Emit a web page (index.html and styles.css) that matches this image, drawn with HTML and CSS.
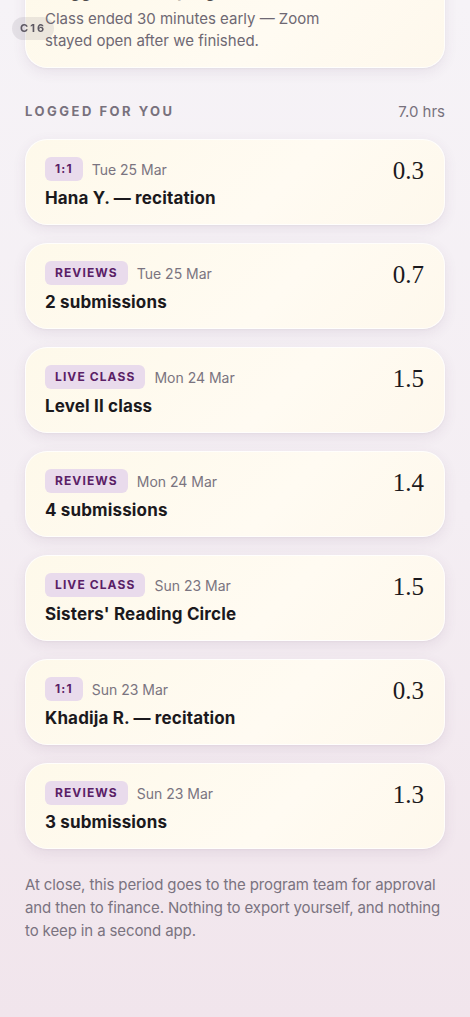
FILE: index.html
```html
<!DOCTYPE html>
<html lang="en">
<head>
  <meta charset="UTF-8" />
  <meta name="viewport" content="width=device-width, initial-scale=1.0" />
  <title>Logged hours</title>
  <link rel="stylesheet" href="styles.css">
</head>
<body>

  <div class="screen-tag">C16</div>

  <main class="page">
    <section class="card note-card">
      <div class="card-title">Flagged for the program team</div>
      <p class="note">Class ended 30 minutes early — Zoom stayed open after we finished.</p>
    </section>

    <div class="section-head">
      <span class="section-label">Logged for you</span>
      <span class="section-total">7.0 hrs</span>
    </div>

    <ul class="log-list">
      <li class="card log-card">
        <div class="log-main">
          <div class="log-meta"><span class="pill">1:1</span><span class="log-date">Tue 25 Mar</span></div>
          <div class="card-title">Hana Y. — recitation</div>
        </div>
        <div class="log-hours">0.3</div>
      </li>
      <li class="card log-card">
        <div class="log-main">
          <div class="log-meta"><span class="pill">Reviews</span><span class="log-date">Tue 25 Mar</span></div>
          <div class="card-title">2 submissions</div>
        </div>
        <div class="log-hours">0.7</div>
      </li>
      <li class="card log-card">
        <div class="log-main">
          <div class="log-meta"><span class="pill">Live class</span><span class="log-date">Mon 24 Mar</span></div>
          <div class="card-title">Level II class</div>
        </div>
        <div class="log-hours">1.5</div>
      </li>
      <li class="card log-card">
        <div class="log-main">
          <div class="log-meta"><span class="pill">Reviews</span><span class="log-date">Mon 24 Mar</span></div>
          <div class="card-title">4 submissions</div>
        </div>
        <div class="log-hours">1.4</div>
      </li>
      <li class="card log-card">
        <div class="log-main">
          <div class="log-meta"><span class="pill">Live class</span><span class="log-date">Sun 23 Mar</span></div>
          <div class="card-title">Sisters' Reading Circle</div>
        </div>
        <div class="log-hours">1.5</div>
      </li>
      <li class="card log-card">
        <div class="log-main">
          <div class="log-meta"><span class="pill">1:1</span><span class="log-date">Sun 23 Mar</span></div>
          <div class="card-title">Khadija R. — recitation</div>
        </div>
        <div class="log-hours">0.3</div>
      </li>
      <li class="card log-card">
        <div class="log-main">
          <div class="log-meta"><span class="pill">Reviews</span><span class="log-date">Sun 23 Mar</span></div>
          <div class="card-title">3 submissions</div>
        </div>
        <div class="log-hours">1.3</div>
      </li>
    </ul>

    <p class="footnote">At close, this period goes to the program team for approval and then to finance. Nothing to export yourself, and nothing to keep in a second app.</p>
  </main>

</body>
</html>
```

FILE: styles.css
```css
* {
  margin: 0;
  padding: 0;
  box-sizing: border-box;
}

html, body {
  height: 100%;
}

body {
  font-family: Inter, "Noto Sans", sans-serif;
  background: linear-gradient(180deg, #f6f3f7 0%, #f4eef3 50%, #f1e5ec 100%);
  color: #1c1a1e;
  overflow: hidden;
}

.screen-tag {
  position: fixed;
  top: 17px;
  left: 12px;
  padding: 0 8px;
  height: 23px;
  line-height: 23px;
  border-radius: 12px;
  background: rgba(120, 115, 125, 0.14);
  color: #5d5862;
  font-size: 11px;
  font-weight: 700;
  letter-spacing: 2px;
  z-index: 5;
}

.page {
  margin-top: -40px;
  padding: 0 25px;
}

.card {
  background: linear-gradient(135deg, #fef9ea 0%, #fffbf2 60%, #fef8ec 100%);
  border: 1px solid rgba(255, 255, 255, 0.8);
  border-radius: 22px;
  box-shadow: 0 4px 14px rgba(90, 60, 100, 0.09), 0 1px 2px rgba(90, 60, 100, 0.05);
}

.card-title {
  font-size: 17px;
  font-weight: 700;
  line-height: 24px;
  color: #1b191d;
  letter-spacing: 0.15px;
}

.note-card {
  padding: 18px 19px 15px;
}

.note-card .card-title {
  margin-bottom: 5px;
}

.note {
  font-size: 15px;
  line-height: 22px;
  color: #6e6873;
  padding-right: 60px;
}

.section-head {
  display: flex;
  justify-content: space-between;
  align-items: center;
  margin-top: 34px;
  height: 18px;
}

.section-label {
  font-size: 13px;
  font-weight: 700;
  letter-spacing: 2.5px;
  text-transform: uppercase;
  color: #78717d;
}

.section-total {
  font-size: 15px;
  color: #78717d;
}

.log-list {
  list-style: none;
  margin-top: 19px;
  display: flex;
  flex-direction: column;
  gap: 18px;
}

.log-card {
  display: flex;
  justify-content: space-between;
  align-items: flex-start;
  padding: 17px 20px 14px 19px;
}

.log-meta {
  display: flex;
  align-items: center;
  gap: 9px;
  height: 24px;
  margin-bottom: 5px;
}

.pill {
  display: inline-block;
  height: 24px;
  line-height: 24px;
  padding: 0 10px;
  border-radius: 6px;
  background: #e9dbec;
  color: #5a2066;
  font-size: 12px;
  font-weight: 700;
  letter-spacing: 1.1px;
  text-transform: uppercase;
}

.log-date {
  font-size: 14px;
  color: #7a7480;
}

.log-hours {
  font-family: "Liberation Serif", "DejaVu Serif", serif;
  font-size: 25px;
  line-height: 28px;
  color: #1b191d;
}

.footnote {
  margin-top: 24px;
  font-size: 15px;
  line-height: 23px;
  color: #7a7380;
  letter-spacing: -0.12px;
}
```
